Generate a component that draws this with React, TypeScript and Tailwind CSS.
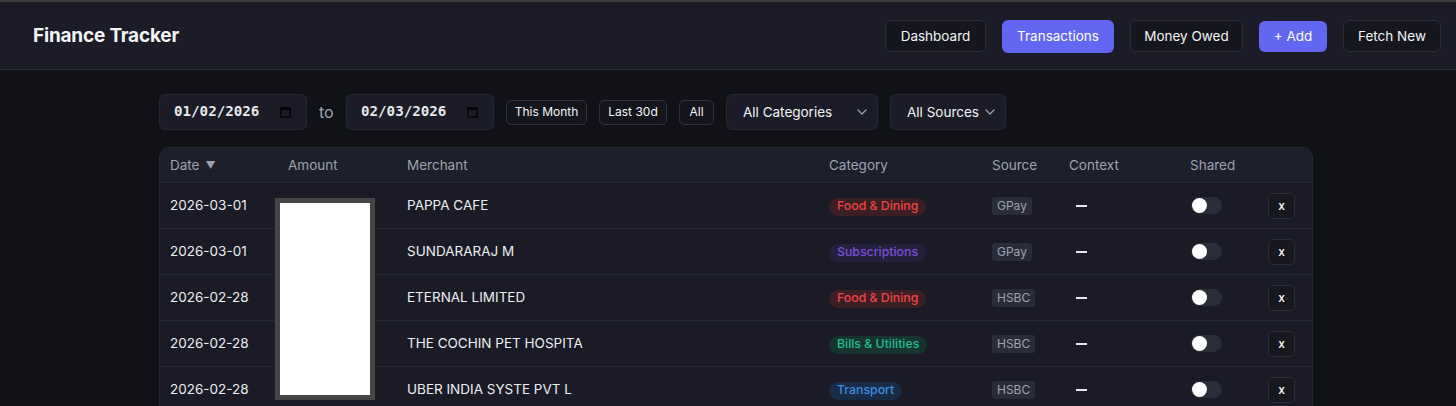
import React from "react";

const rows = [
  { date: "2026-03-01", merchant: "PAPPA CAFE", cat: "Food & Dining", catCls: "bg-[#3b1f24] text-[#ef4444]", src: "GPay" },
  { date: "2026-03-01", merchant: "SUNDARARAJ M", cat: "Subscriptions", catCls: "bg-[#24213d] text-[#7c4ddb]", src: "GPay" },
  { date: "2026-02-28", merchant: "ETERNAL LIMITED", cat: "Food & Dining", catCls: "bg-[#3b1f24] text-[#ef4444]", src: "HSBC" },
  { date: "2026-02-28", merchant: "THE COCHIN PET HOSPITA", cat: "Bills & Utilities", catCls: "bg-[#173430] text-[#1fbf8f]", src: "HSBC" },
  { date: "2026-02-28", merchant: "UBER INDIA SYSTE PVT L", cat: "Transport", catCls: "bg-[#1a2c45] text-[#3b8fe0]", src: "HSBC" },
];

const grid = "grid grid-cols-[118px_119px_422px_163px_77px_121px_78px_56px]";

function Calendar() {
  return (
    <svg width="11" height="12" viewBox="0 0 11 12" className="shrink-0">
      <rect x="0" y="1" width="11" height="11" rx="1.5" fill="#050507" />
      <rect x="1.5" y="4" width="8" height="6.5" fill="#1a1b24" />
    </svg>
  );
}

function Chevron() {
  return (
    <svg width="10" height="6" viewBox="0 0 10 6" className="shrink-0">
      <path d="M1 1l4 4 4-4" fill="none" stroke="#9ca3af" strokeWidth="1.2" strokeLinecap="round" strokeLinejoin="round" />
    </svg>
  );
}

function DateBox({ value }: { value: string }) {
  return (
    <div className="flex h-[36px] w-[148px] items-center justify-between rounded-[6px] border border-[#262833] bg-[#1b1c27] pl-[14px] pr-[15px]">
      <span className="font-['DejaVu_Sans_Mono',monospace] text-[14.2px] font-semibold text-[#e5e7eb]">{value}</span>
      <Calendar />
    </div>
  );
}

export default function App() {
  return (
    <div className="min-h-[406px] bg-[#111218] font-['Inter',sans-serif] text-[#e5e7eb]">
      <div className="h-[2px] bg-[#3b3b3f]" />
      <div className="h-[1px] bg-[#1f2029]" />
      <header className="flex h-[67px] items-center justify-between border-b border-[#2a2c37] bg-[#1b1c27] pl-[33px] pr-[15px]">
        <h1 className="text-[19px] font-bold tracking-[-0.2px] text-[#f3f4f6]">Finance Tracker</h1>
        <nav className="flex items-center gap-4 text-[13.5px]">
          <button className="h-[32px] w-[101px] rounded-[6px] border border-[#2a2c37] bg-[#15161e] text-[#f3f4f6]">Dashboard</button>
          <button className="h-[33px] w-[112px] rounded-[6px] bg-[#6366f1] text-white">Transactions</button>
          <button className="h-[32px] w-[113px] rounded-[6px] border border-[#2a2c37] bg-[#15161e] text-[#f3f4f6]">Money Owed</button>
          <button className="h-[31px] w-[68px] rounded-[6px] bg-[#6366f1] text-white">+ Add</button>
          <button className="h-[32px] w-[98px] rounded-[6px] border border-[#2a2c37] bg-[#15161e] text-[#f3f4f6]">Fetch New</button>
        </nav>
      </header>

      <main className="pl-[159px] pt-[24px]">
        <div className="flex h-[36px] items-center gap-3">
          <DateBox value="01/02/2026" />
          <span className="w-[15px] text-[16px] text-[#9ca3af]">to</span>
          <DateBox value="02/03/2026" />
          <button className="h-[25px] w-[81px] rounded-[5px] border border-[#30323c] bg-[#15161d] text-[12px] text-[#f3f4f6]">This Month</button>
          <button className="h-[25px] w-[68px] rounded-[5px] border border-[#30323c] bg-[#15161d] text-[12px] text-[#f3f4f6]">Last 30d</button>
          <button className="h-[25px] w-[35px] rounded-[5px] border border-[#30323c] bg-[#15161d] text-[12px] text-[#f3f4f6]">All</button>
          <div className="flex h-[36px] w-[152px] items-center justify-between rounded-[6px] border border-[#262833] bg-[#1b1c27] pl-[16px] pr-[10px] text-[13.5px] text-[#f3f4f6]">
            <span>All Categories</span>
            <Chevron />
          </div>
          <div className="flex h-[36px] w-[116px] items-center justify-between rounded-[6px] border border-[#262833] bg-[#1b1c27] pl-[16px] pr-[10px] text-[13.5px] text-[#f3f4f6]">
            <span>All Sources</span>
            <Chevron />
          </div>
        </div>

        <div className="relative mt-[17px] w-[1154px] overflow-hidden rounded-t-[10px] border border-b-0 border-[#252733] bg-[#1a1b26]">
          <div className={`${grid} h-[35px] items-center border-b border-[#262834] bg-[#1d1f2b] text-[13.5px] text-[#9ca3af]`}>
            <div className="flex items-center gap-[6px] px-[10px]">
              <span>Date</span>
              <span className="text-[10px]">▼</span>
            </div>
            <div className="px-[10px]">Amount</div>
            <div className="px-[10px]">Merchant</div>
            <div className="px-[10px]">Category</div>
            <div className="px-[10px]">Source</div>
            <div className="px-[10px]">Context</div>
            <div className="px-[10px]">Shared</div>
            <div />
          </div>
          {rows.map((r, i) => (
            <div key={i} className={`${grid} h-[46px] items-center border-b border-[#262834] text-[13.5px] text-[#eceef2]`}>
              <div className="px-[10px]">{r.date}</div>
              <div className="px-[10px]" />
              <div className="px-[10px]">{r.merchant}</div>
              <div className="px-[10px]">
                <span className={`inline-flex h-[18px] items-center rounded-full px-[8px] text-[12.3px] font-medium ${r.catCls}`}>{r.cat}</span>
              </div>
              <div className="px-[10px]">
                <span className="inline-flex h-[18px] items-center rounded-[3px] bg-[#2a2c38] px-[5px] text-[12px] text-[#9ca3af]">{r.src}</span>
              </div>
              <div className="pl-[17px]">
                <div className="h-[2px] w-[11px] bg-[#e5e7eb]" />
              </div>
              <div className="px-[11px]">
                <div className="flex h-[17px] w-[31px] items-center rounded-full bg-[#2b2d3a] px-[1px]">
                  <div className="h-[15px] w-[15px] rounded-full bg-white" />
                </div>
              </div>
              <div className="px-[10px]">
                <button className="flex h-[26px] w-[27px] items-center justify-center rounded-[5px] border border-[#2a2c37] bg-[#16171f] text-[12px] font-medium text-white">x</button>
              </div>
            </div>
          ))}
          <div className="absolute left-[115px] top-[50px] h-[202px] w-[100px] border-[5px] border-[#454545] bg-white" />
        </div>
      </main>
    </div>
  );
}
